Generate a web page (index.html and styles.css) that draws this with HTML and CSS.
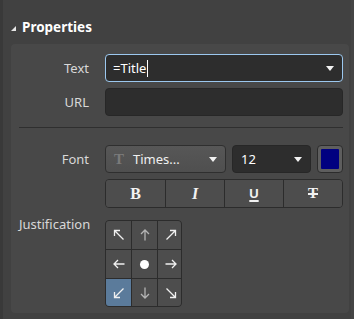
FILE: index.html
```html
<!DOCTYPE html>
<html lang="en">
<head>
    <meta charset="UTF-8">
    <title>Properties</title>
    <link rel="stylesheet" href="styles.css">
</head>
<body>
    <div class="pane">
        <!-- Section header -->
        <div class="pane-head">
            <span class="twisty"></span>
            <span class="pane-title">Properties</span>
        </div>

        <div class="group">
            <div class="row">
                <label class="lbl">Text</label>
                <div class="combo focused">
                    <span class="combo-value">=Title</span><span class="text-caret"></span>
                    <span class="drop"></span>
                </div>
            </div>
            <div class="row">
                <label class="lbl">URL</label>
                <div class="field"></div>
            </div>

            <div class="sep"></div>

            <div class="row">
                <label class="lbl">Font</label>
                <div class="font-line">
                    <div class="btn-combo font-face">
                        <span class="face-icon">T</span>
                        <span class="combo-value">Times...</span>
                        <span class="drop"></span>
                    </div>
                    <div class="combo font-size">
                        <span class="combo-value">12</span>
                        <span class="drop"></span>
                    </div>
                    <div class="swatch"><span class="swatch-fill"></span></div>
                </div>
            </div>
            <div class="row">
                <span class="lbl"></span>
                <div class="seg">
                    <button class="seg-btn b">B</button>
                    <button class="seg-btn i">I</button>
                    <button class="seg-btn u">U</button>
                    <button class="seg-btn s">T</button>
                </div>
            </div>

            <div class="row top">
                <label class="lbl">Justification</label>
                <div class="just">
                    <button class="cell"><svg viewBox="0 0 12 12"><path d="M10.5 10.5L1.5 1.5M1.5 7V1.5H7"/></svg></button>
                    <button class="cell dim"><svg viewBox="0 0 12 12"><path d="M6 11.5V1M2 5l4-4 4 4"/></svg></button>
                    <button class="cell"><svg viewBox="0 0 12 12"><path d="M1.5 10.5l9-9M5 1.5h5.5V7"/></svg></button>
                    <button class="cell"><svg viewBox="0 0 12 12"><path d="M11.5 6H1M5 2L1 6l4 4"/></svg></button>
                    <button class="cell"><span class="dot"></span></button>
                    <button class="cell"><svg viewBox="0 0 12 12"><path d="M0.5 6H11M7 2l4 4-4 4"/></svg></button>
                    <button class="cell on"><svg viewBox="0 0 12 12"><path d="M10.5 1.5l-9 9M1.5 5v5.5H7"/></svg></button>
                    <button class="cell dim"><svg viewBox="0 0 12 12"><path d="M6 0.5V11M2 7l4 4 4-4"/></svg></button>
                    <button class="cell"><svg viewBox="0 0 12 12"><path d="M1.5 1.5l9 9M10.5 5v5.5H5"/></svg></button>
                </div>
            </div>
        </div>
    </div>
</body>
</html>
```

FILE: styles.css
```css
body {
    margin: 0;
    width: 354px;
    height: 319px;
    background: #414141;
    font-family: 'Noto Sans', 'Open Sans', sans-serif;
    font-size: 13px;
    color: #dcdcdc;
    overflow: hidden;
}

.pane {
    height: 319px;
    border-left: 3px solid #393939;
    border-right: 3px solid #454545;
    box-sizing: border-box;
}

/* Header */
.pane-head {
    height: 44px;
    display: flex;
    align-items: center;
    gap: 6px;
    padding-left: 8px;
    padding-top: 10px;
    box-sizing: border-box;
}

.twisty {
    width: 0;
    height: 0;
    border-left: 5px solid transparent;
    border-bottom: 5px solid #e6e6e6;
    margin-top: 2px;
}

.pane-title {
    font-weight: 700;
    font-size: 13.5px;
    color: #ffffff;
}

/* Group panel */
.group {
    margin-left: 8px;
    width: 338px;
    height: 269px;
    box-sizing: border-box;
    background: #484848;
    border-radius: 4px;
    padding: 10px 6px 0 8px;
    display: flex;
    flex-direction: column;
    gap: 6px;
}

.row {
    display: flex;
    align-items: center;
    gap: 16px;
}

.row.top {
    align-items: flex-start;
    margin-top: 6px;
}

.lbl {
    width: 70px;
    flex-shrink: 0;
    text-align: right;
    white-space: nowrap;
    color: #d8d8d8;
}

.row.top .lbl {
    line-height: 16px;
    margin-top: -4px;
}

/* Inputs */
.combo,
.field {
    flex: 1;
    height: 28px;
    box-sizing: border-box;
    background: #2d2d2d;
    border: 1px solid #272727;
    border-radius: 4px;
    display: flex;
    align-items: center;
    padding: 0 8px 0 7px;
    color: #ffffff;
    position: relative;
}

.combo.focused {
    border-color: #9cc8ef;
    padding-left: 7px;
}

.combo-value {
    white-space: nowrap;
}

.text-caret {
    width: 1px;
    height: 17px;
    background: #ffffff;
    margin-left: 1px;
}

.drop {
    margin-left: auto;
    width: 0;
    height: 0;
    border-left: 4px solid transparent;
    border-right: 4px solid transparent;
    border-top: 5px solid #f2f2f2;
}

.sep {
    height: 1px;
    background: #2f2f2f;
    margin: 5px 0 10px 0;
}

/* Font line */
.font-line {
    flex: 1;
    display: flex;
    gap: 6px;
    margin-top: 1px;
}

.btn-combo {
    height: 28px;
    box-sizing: border-box;
    background: linear-gradient(#575757, #4f4f4f);
    border: 1px solid #2f2f2f;
    border-radius: 4px;
    display: flex;
    align-items: center;
    padding: 0 8px 0 8px;
    color: #f0f0f0;
}

.font-face {
    width: 121px;
}

.face-icon {
    font-family: 'Liberation Serif', serif;
    font-weight: 700;
    font-size: 15px;
    color: #7a7a7a;
    width: 12px;
    margin-right: 7px;
}

.font-size {
    flex: none;
    width: 79px;
    padding-left: 8px;
}

.swatch {
    width: 26px;
    height: 28px;
    box-sizing: border-box;
    border: 1px solid #2c2c2c;
    border-radius: 4px;
    background: #5e5e5e;
    padding: 3px;
    display: flex;
}

.swatch-fill {
    flex: 1;
    background: #000080;
    border-radius: 1px;
}

/* Style buttons */
.seg {
    flex: 1;
    height: 29px;
    display: grid;
    grid-template-columns: repeat(4, 1fr);
    border: 1px solid #2c2c2c;
    border-radius: 4px;
    overflow: hidden;
    box-sizing: border-box;
}

.seg-btn {
    background: #4d4d4d;
    border: none;
    border-left: 1px solid #2c2c2c;
    color: #f2f2f2;
    font-family: 'Liberation Serif', serif;
    font-size: 16px;
    padding: 0;
}

.seg-btn:first-child {
    border-left: none;
}

.seg-btn.b {
    font-weight: 700;
}

.seg-btn.i {
    font-style: italic;
    font-weight: 700;
}

.seg-btn.u {
    font-family: 'Liberation Sans', sans-serif;
    font-weight: 700;
    font-size: 13px;
    text-decoration: underline;
    text-underline-offset: 2px;
    text-decoration-thickness: 2px;
}

.seg-btn.s {
    font-weight: 700;
    font-size: 15px;
    text-decoration: line-through;
    text-decoration-thickness: 2px;
}

/* Justification grid */
.just {
    display: grid;
    grid-template-columns: 25px 25px 25px;
    grid-template-rows: 28px 28px 27px;
    width: 77px;
    box-sizing: border-box;
    border: 1px solid #2c2c2c;
    border-radius: 4px;
    overflow: hidden;
    background: #2c2c2c;
    gap: 1px;
}

.cell {
    background: #4d4d4d;
    border: none;
    padding: 0;
    display: flex;
    align-items: center;
    justify-content: center;
}

.cell svg {
    width: 12px;
    height: 12px;
    fill: none;
    stroke: #f0f0f0;
    stroke-width: 1.3;
}

.cell.dim svg {
    stroke: #b4b4b4;
}

.cell.on {
    background: #5b7b9b;
}

.dot {
    width: 9px;
    height: 9px;
    border-radius: 50%;
    background: #ffffff;
}
```
